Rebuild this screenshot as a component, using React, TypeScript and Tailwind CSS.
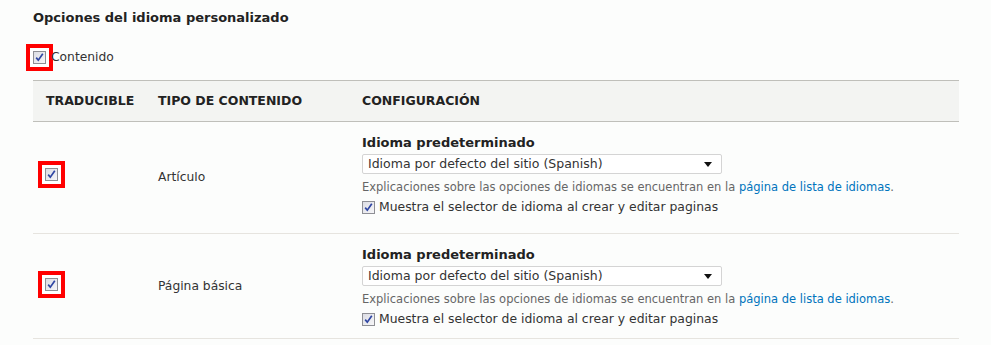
import React from 'react'

const font = { fontFamily: '"DejaVu Sans", Verdana, sans-serif' }

function Check({ mark = false }: { mark?: boolean }) {
  return (
    <span
      className={
        'inline-flex h-[13px] w-[13px] shrink-0 items-center justify-center border border-[#8e8f95] bg-gradient-to-br from-[#dcdde4] to-[#f6f6f8] ' +
        (mark ? 'ring-4 ring-[#f00] ring-offset-[3px] ring-offset-white' : '')
      }
    >
      <svg viewBox="0 0 11 11" className="h-[11px] w-[11px]">
        <path d="M2.2 5.6 L4.3 8.2 L8.8 1.8" fill="none" stroke="#2f46a3" strokeWidth="1.7" />
      </svg>
    </span>
  )
}

function Config({ tall }: { tall?: boolean }) {
  return (
    <div className={'flex flex-col pt-[13px] ' + (tall ? 'pb-[18px]' : 'pb-[11px]')}>
      <div className="text-[13px] leading-[15px] font-bold text-[#222]">Idioma predeterminado</div>
      <div className="mt-[4px] flex h-[20px] w-[360px] items-center justify-between rounded-[2px] border border-[#d4d4d4] bg-white pr-[9px] pl-[5px] text-[12.5px] text-[#333]">
        <span>Idioma por defecto del sitio (Spanish)</span>
        <svg viewBox="0 0 8 5" className="h-[5px] w-[8px]">
          <path d="M0 0 H8 L4 5 Z" fill="#111" />
        </svg>
      </div>
      <div className="mt-[6px] text-[11.5px] leading-[14px] text-[#666]">
        Explicaciones sobre las opciones de idiomas se encuentran en la{' '}
        <a className="text-[#0074bd]">página de lista de idiomas</a>.
      </div>
      <label className="mt-[5px] flex items-center gap-[4px] text-[12.4px] leading-[16px] text-[#333]">
        <Check />
        Muestra el selector de idioma al crear y editar paginas
      </label>
    </div>
  )
}

function Row({ name, tall }: { name: string; tall?: boolean }) {
  return (
    <div className="grid grid-cols-[112px_204px_1fr] border-b border-[#e6e4df]">
      <div className={'flex items-center pl-[12px] ' + (tall ? 'pb-[7px]' : 'pb-[3px]')}>
        <Check mark />
      </div>
      <div className={'flex items-center pl-[13px] text-[12.3px] text-[#333] ' + (tall ? 'pb-[2px]' : '')}>
        {name}
      </div>
      <div className="pl-[13px]">
        <Config tall={tall} />
      </div>
    </div>
  )
}

export default function App() {
  return (
    <div className="h-[345px] w-[991px] bg-[#fcfdfc] pt-[10px] pr-[32px] pl-[33px]" style={font}>
      <h3 className="text-[13px] leading-[16px] font-bold text-[#222]">Opciones del idioma personalizado</h3>
      <div className="mt-[22px] flex items-center gap-[5px] text-[12.3px] text-[#333]">
        <Check mark />
        <span className="relative">Contenido</span>
      </div>
      <div className="mt-[14px]">
        <div className="grid h-[42px] grid-cols-[112px_204px_1fr] items-center border-y border-[#bfbfba] bg-[#f3f4f2] text-[12.5px] font-bold text-[#222] uppercase">
          <div className="pl-[13px]">Traducible</div>
          <div className="pl-[13px]">Tipo de contenido</div>
          <div className="pl-[13px]">Configuración</div>
        </div>
        <Row name="Artículo" tall />
        <Row name="Página básica" />
      </div>
    </div>
  )
}
